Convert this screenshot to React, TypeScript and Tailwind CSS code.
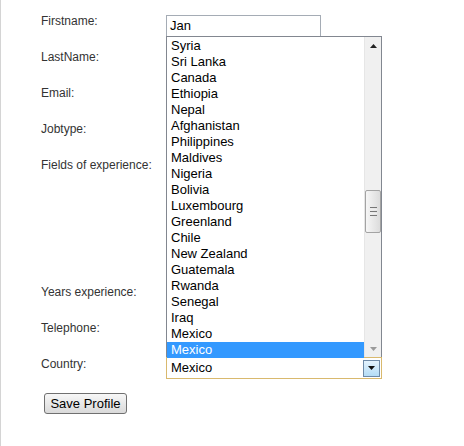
import React from 'react';

const countries = [
  'Syria', 'Sri Lanka', 'Canada', 'Ethiopia', 'Nepal', 'Afghanistan', 'Philippines', 'Maldives',
  'Nigeria', 'Bolivia', 'Luxembourg', 'Greenland', 'Chile', 'New Zealand', 'Guatemala', 'Rwanda',
  'Senegal', 'Iraq', 'Mexico', 'Mexico',
];

const font = { fontFamily: '"Liberation Sans", Arial, sans-serif' };

function Row({ label, tall, children }: { label: string; tall?: boolean; children?: React.ReactNode }) {
  return (
    <div className={`flex items-start ${tall ? 'h-[127px]' : 'h-9'}`}>
      <div className="w-[125px] shrink-0 text-[12px] leading-[14px] text-[#333]">{label}</div>
      {children}
    </div>
  );
}

function TextBox({ value }: { value?: string }) {
  return (
    <div className="mt-px h-[22px] w-[155px] border border-[#a5acb5] bg-white pl-[3px] text-[13px] leading-[20px] text-black">
      {value}
    </div>
  );
}

function Scrollbar() {
  return (
    <div className="flex w-[17px] shrink-0 flex-col border-l border-[#e6e6e6] bg-[#f0f0f0]">
      <div className="flex h-[17px] items-center justify-center">
        <svg width="7" height="4" viewBox="0 0 7 4"><path d="M0 4 L3.5 0 L7 4 Z" fill="#222" /></svg>
      </div>
      <div className="h-[136px]" />
      <div className="flex h-[43px] items-center justify-center rounded-[2px] border border-[#a3a3a3] bg-gradient-to-r from-[#f6f6f6] to-[#dcdcdc]">
        <div className="flex flex-col gap-[1px]">
          <div className="h-px w-[7px] bg-[#777]" />
          <div className="h-px w-[7px] bg-[#eee]" />
          <div className="h-px w-[7px] bg-[#777]" />
          <div className="h-px w-[7px] bg-[#eee]" />
          <div className="h-px w-[7px] bg-[#777]" />
        </div>
      </div>
      <div className="flex-1" />
      <div className="flex h-[17px] items-center justify-center">
        <svg width="7" height="4" viewBox="0 0 7 4"><path d="M0 0 L3.5 4 L7 0 Z" fill="#9a9a9a" /></svg>
      </div>
    </div>
  );
}

function CountrySelect() {
  return (
    <div className="relative h-[22px] w-[216px]">
      <div className="absolute bottom-full left-0 flex h-[321px] w-[216px] border border-b-0 border-[#828790] bg-white">
        <div className="flex-1 pt-px">
          {countries.map((c, i) => (
            <div
              key={i}
              className={`h-4 pl-[4px] text-[13px] leading-[16px] ${i === countries.length - 1 ? 'bg-[#3399ff] text-white' : 'text-black'}`}
            >
              {c}
            </div>
          ))}
        </div>
        <Scrollbar />
      </div>
      <div className="flex h-[22px] items-center border border-[#d9b96e] bg-white pl-[4px] pr-[1px]">
        <div className="flex-1 text-[13px] leading-[16px] text-black">Mexico</div>
        <div className="flex h-[17px] w-[17px] items-center justify-center border border-[#6e8aa8] bg-gradient-to-b from-[#e4f3fd] to-[#b4dcf6]">
          <svg width="7" height="4" viewBox="0 0 7 4"><path d="M0 0 L3.5 4 L7 0 Z" fill="#111" /></svg>
        </div>
      </div>
    </div>
  );
}

export default function App() {
  return (
    <div className="h-[446px] w-[464px] border-l border-[#d4d4d4] bg-white pl-[40px] pt-[14px]" style={font}>
      <Row label="Firstname:"><TextBox value="Jan" /></Row>
      <Row label="LastName:"><TextBox /></Row>
      <Row label="Email:"><TextBox /></Row>
      <Row label="Jobtype:"><TextBox /></Row>
      <Row label="Fields of experience:" tall><TextBox /></Row>
      <Row label="Years experience:"><TextBox /></Row>
      <Row label="Telephone:"><TextBox /></Row>
      <Row label="Country:"><CountrySelect /></Row>
      <button className="ml-[3px] block h-[21px] w-[83px] rounded-[3px] border border-[#707070] bg-gradient-to-b from-[#f7f7f7] to-[#dadada] text-[13px] leading-[16px] text-black">
        Save Profile
      </button>
    </div>
  );
}
